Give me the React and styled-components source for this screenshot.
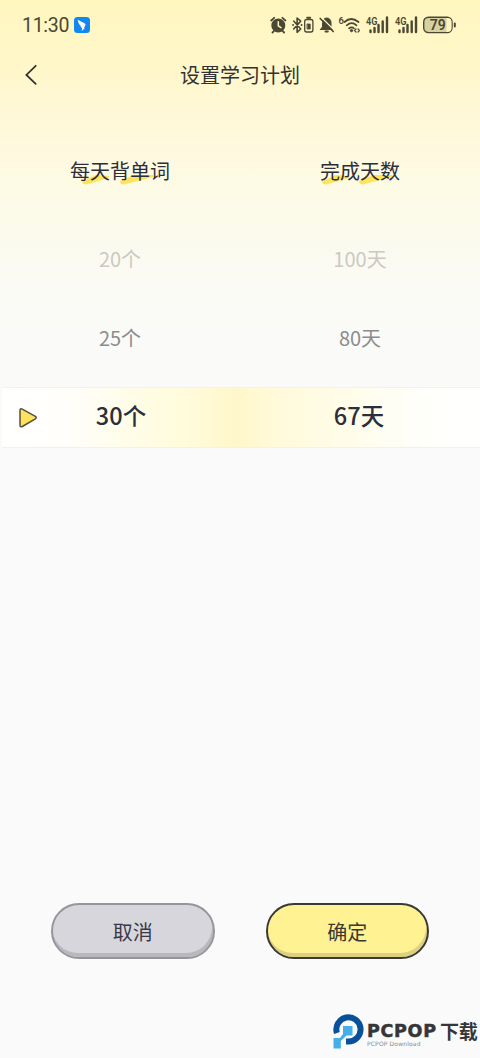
import styled, { createGlobalStyle } from 'styled-components';

const GlobalStyle = createGlobalStyle`
  * { box-sizing: border-box; }
  body {
    margin: 0;
    background: #fafafa;
    font-family: 'Noto Sans CJK SC', sans-serif;
  }
`;

const Screen = styled.div`
  width: 480px;
  height: 1058px;
  display: flex;
  flex-direction: column;
  overflow: hidden;
  background: linear-gradient(#fff6c0 0px, #fff7c8 60px, #fff8d8 120px, #fefae2 170px, #fcfaeb 220px, #fbfaf3 270px, #fafaf8 330px, #fafafa 390px);
`;

const StatusBar = styled.div`
  height: 50px;
  display: flex;
  align-items: center;
  padding: 0 23px 0 22px;
  color: #4a4733;
`;

const Clock = styled.span`
  width: 47px;
  font: 400 19.5px/24px Roboto, sans-serif;
  letter-spacing: -0.3px;
  padding-top: 2px;
  margin-right: 5px;
  white-space: nowrap;
`;

const StatusIcons = styled.div`
  display: flex;
  align-items: center;
  margin-left: auto;
  svg { display: block; }
`;

const Header = styled.header`
  height: 50px;
  display: grid;
  grid-template-columns: 60px 1fr 60px;
  align-items: center;
  svg { margin-left: 24px; }
`;

const Title = styled.h1`
  margin: 0;
  padding-bottom: 1px;
  font-size: 20px;
  font-weight: 400;
  line-height: 30px;
  text-align: center;
  color: #333230;
`;

const Picker = styled.main`
  display: flex;
  flex-direction: column;
  padding-top: 41px;
`;

const Row = styled.div`
  display: grid;
  grid-template-columns: 1fr 1fr;
  justify-items: center;
  align-items: center;
  height: ${(props) => props.$height}px;
  font-size: 20px;
  color: ${(props) => props.$color};
`;

const Heading = styled.h2`
  position: relative;
  margin: 0;
  font-size: 20px;
  font-weight: 400;
  line-height: 30px;
  color: #2c2e3a;
  svg {
    position: absolute;
    left: ${(props) => props.$mark}px;
    top: 19px;
  }
  span { position: relative; }
`;

const SelectedRow = styled(Row)`
  position: relative;
  margin: 13px 0 0 2px;
  padding: 0 2px 5px 0;
  border-top: 1px solid #f2f1ec;
  border-bottom: 1px solid #f2f1ec;
  background: linear-gradient(90deg, #fff 0%, #fffefa 14%, #fffde9 26%, #fffbdc 38%, #fff7cb 49%, #fffadb 58%, #fffdeb 74%, #fffffb 88%, #fff 100%);
  font-size: 23.5px;
  font-weight: 500;
`;

const Pointer = styled.svg`
  position: absolute;
  left: 16px;
  top: 19px;
`;

const Actions = styled.div`
  display: flex;
  gap: 51px;
  margin: auto 51px 0;
`;

const Button = styled.button`
  width: 164px;
  height: 56px;
  padding: 0;
  border: 2px solid ${(props) => props.$border};
  border-radius: 28px;
  background: ${(props) => props.$fill};
  box-shadow: inset -1px -4px 0 ${(props) => props.$shade};
  color: ${(props) => props.$color};
  font: 400 20px 'Noto Sans CJK SC', sans-serif;
`;

const Footer = styled.footer`
  height: 99px;
  display: flex;
  align-items: flex-end;
  justify-content: flex-end;
  padding: 0 2px 9px 0;
`;

const Brand = styled.div`
  width: 111px;
  height: 28px;
  margin-left: 2px;
`;

const BrandName = styled.div`
  display: flex;
  align-items: center;
  height: 20px;
  color: #363638;
  white-space: nowrap;
  b {
    width: 73px;
    font: 700 17.5px/20px 'DejaVu Sans', sans-serif;
    letter-spacing: 0.7px;
    -webkit-text-stroke: 0.5px #363638;
  }
  strong {
    font: 700 19px/20px 'Noto Sans CJK SC', sans-serif;
    letter-spacing: -0.3px;
  }
`;

const BrandSub = styled.div`
  font: 6px/7px 'DejaVu Sans', sans-serif;
  letter-spacing: 0.15px;
  margin-top: -1px;
  color: #88888a;
`;

const Signal = () => (
  <svg width="24" height="18" viewBox="0 0 24 18">
    <text x="0" y="8.5" fontSize="10" fontWeight="600" fontFamily="Roboto" fill="#4a4733" textLength="11.5" lengthAdjust="spacingAndGlyphs">4G</text>
    <path d="M4.5 14.5v1.5M8.5 12V16M12.5 9v7M16.7 5.5V16M21 1.5V16" stroke="#4a4733" strokeWidth="2.4" strokeLinecap="round" />
  </svg>
);

const Underline = ({ gap }) => (
  <svg width="80" height="12" viewBox="0 0 80 12">
    <g fill="#ffe35c">
      <path d="M1 6Q8 3 15 0L28 1V3Q20 5 14 7L5 9.5Q1 9.5 1 6Z" />
      <path transform={`translate(${gap} 0)`} d="M1 6Q8 3 15 0L34 0V2Q24 5 14 7L5 9.5Q1 9.5 1 6Z" />
    </g>
  </svg>
);

const App = () => (
  <>
    <GlobalStyle />
    <Screen>
      <StatusBar>
        <Clock>11:30</Clock>
        <svg width="16" height="16" viewBox="0 0 16 16">
          <rect width="16" height="16" rx="3.5" fill="#1188ef" />
          <path d="M3.7 2.8 10.5 6.3Q12.3 7.4 11 9.3L9.7 11.2H11L7.6 14 8.2 11 6.1 9.7 7.3 9.4Q4.4 7.5 3.7 2.8Z" fill="#fff" />
        </svg>
        <StatusIcons>
          <svg width="94" height="20" viewBox="270 15 94 20">
            <g fill="none" stroke="#4a4733" strokeWidth="1.8" strokeLinecap="round" strokeLinejoin="round">
              <circle cx="278.3" cy="25.5" r="6.1" fill="#4a4733" />
              <path d="m271.2 20.5 3-2.7M285.4 20.5l-3-2.7M273.8 31.2l-1.3 1.3M282.8 31.2l1.3 1.3" />
              <path d="M278.3 21.7v4.2l2.7 1.8" stroke="#fff5c3" strokeWidth="1.5" />
              <path d="m293.7 21 7 8-3.6 3.3V18l3.6 3.1-7 7.9" strokeWidth="1.6" />
              <path d="M293 25h.1M301.5 25h.1" />
              <rect x="304.7" y="19.5" width="8.2" height="12.5" rx="2" strokeWidth="1.3" />
              <path d="M307.2 17.8h3" strokeWidth="2" />
              <rect x="307.4" y="24" width="2.8" height="5" fill="#4a4733" strokeWidth=".8" />
              <path d="M320.5 29.5h12.3l-1.8-2.7v-4.3c0-6-8.3-6-8.5 0v4.3l-2 2.7Z" fill="#4a4733" strokeWidth="1" />
              <path d="M325.4 31.5h2.5" />
              <path d="m321.2 17.3 13.6 13.4" stroke="#fff5c3" strokeWidth="1.3" />
              <path d="m320.2 18.5 13 13" strokeWidth="1.7" />
              <path d="M344.5 22q6.7-6 14 0M346.7 25.3q5-4.2 9.8 0M349 28.3q2.5-2 5 0" strokeWidth="1.7" />
              <circle cx="351.5" cy="30.6" r="1.2" fill="#4a4733" strokeWidth="1" />
              <path d="m356 29-1.4 1.5 1.4 1.5M358 29l1.4 1.5-1.4 1.5" strokeWidth="1.2" />
            </g>
            <text x="338.5" y="24" fontSize="9.5" fontWeight="600" fontFamily="Roboto" fill="#4a4733">6</text>
          </svg>
          <svg width="2" height="18" />
          <Signal />
          <svg width="5" height="18" />
          <Signal />
          <svg width="38" height="18" viewBox="0 0 38 18">
            <rect x="4.7" y="1.2" width="28.3" height="15.4" rx="4.8" fill="#d7d1a2" stroke="#4a4733" strokeWidth="1.4" />
            <path d="M27.5 2h1a4 4 0 0 1 4 4v6a4 4 0 0 1-4 4h-1Z" fill="#fff5c3" />
            <path d="M35.8 7.5v3" stroke="#4a4733" strokeWidth="2" strokeLinecap="round" />
            <text x="18.8" y="13.8" textAnchor="middle" fontSize="14" fontWeight="600" fontFamily="Roboto" fill="#4a4733">79</text>
          </svg>
        </StatusIcons>
      </StatusBar>

      <Header>
        <svg width="14" height="22" viewBox="0 0 14 22">
          <path d="m11.7 1.8-9.3 9.1 9.3 9" fill="none" stroke="#333230" strokeWidth="1.8" strokeLinecap="round" />
        </svg>
        <Title>设置学习计划</Title>
      </Header>

      <Picker>
        <Row $height={60}>
          <Heading $mark={11}><Underline gap={38} /><span>每天背单词</span></Heading>
          <Heading $mark={1}><Underline gap={37} /><span>完成天数</span></Heading>
        </Row>
        <Row $height={114} $color="#cbc9c1"><span>20个</span><span>100天</span></Row>
        <Row $height={45} $color="#8c8c8d"><span>25个</span><span>80天</span></Row>
        <Row $height={14} />
        <SelectedRow $height={61} $color="#2c2e3a">
          <Pointer width="20" height="22" viewBox="0 0 20 22">
            <path d="M2 3.5Q2 1 4.3 2.2L17.4 9.4Q19 10.5 17.4 11.8L4.3 19.5Q2 20.5 2 18Z" fill="#ffe15e" stroke="#53503f" strokeWidth="1.5" strokeLinejoin="round" />
          </Pointer>
          <span>30个</span>
          <span>67天</span>
        </SelectedRow>
      </Picker>

      <Actions>
        <Button $fill="#d7d6dc" $border="#96959c" $shade="#b9b8bd" $color="#393946">取消</Button>
        <Button $fill="#fff292" $border="#3b3936" $shade="#dbd17f" $color="#3b3931">确定</Button>
      </Actions>

      <Footer>
        <svg width="32" height="36" viewBox="0 0 32 36">
          <path d="M3.9 20A12.1 12.1 0 1 1 15.5 28.5H13" fill="none" stroke="#08509b" strokeWidth="6" />
          <path d="M10 13h9.5v9.5h-6L7.8 28v7.5H.5V25H7l3-4Z" fill="#43aee8" />
        </svg>
        <Brand>
          <BrandName><b>PCPOP</b><strong>下载</strong></BrandName>
          <BrandSub>PCPOP Download</BrandSub>
        </Brand>
      </Footer>
    </Screen>
  </>
);

export default App;
